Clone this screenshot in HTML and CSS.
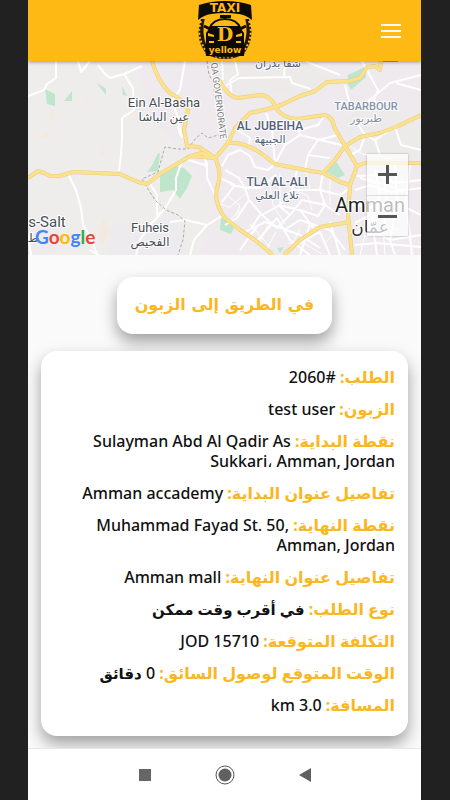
FILE: index.html
```html
<!DOCTYPE html>
<html lang="ar" dir="rtl">
<head>
<meta charset="utf-8">
<meta name="viewport" content="width=device-width, initial-scale=1">
<title>Taxi D Yellow</title>
<link rel="stylesheet" href="styles.css">
</head>
<body>
<div class="phone">
  <header class="topbar">
    <svg class="logo" viewBox="0 0 56 60" role="img" aria-label="Taxi D yellow">
      <path d="M4 18Q-1 32 4 44L9 53Q18 58 28 58Q38 58 47 53L52 44Q57 32 52 18Z" fill="#1c1709"/>
      <path d="M8 16Q4 32 10 46H46Q52 32 48 16Z" fill="#ffb915"/>
      <path d="M4 20Q0 32 5 43L10 52M52 20Q56 32 51 43L46 52" fill="none" stroke="#ffb915" stroke-width="2" stroke-dasharray="2 2"/>
      <path d="M18 56Q28 58 38 56" fill="none" stroke="#ffb915" stroke-dasharray="2 2"/>
      <path d="M2 4Q14 0 28 0Q42 0 54 4L55 19Q49 14 42 13Q28 11 14 13Q7 14 1 19Z" fill="#0d0b07"/>
      <path d="M23 14H34V17H23Z" fill="#0d0b07"/>
      <path d="M12 28Q16 18 28 18Q40 18 44 28" fill="none" stroke="#0d0b07" stroke-width="2"/>
      <path d="M7 25L13 28M49 25L43 28" stroke="#0d0b07" stroke-width="3"/>
      <path d="M9 32L14 25H42L47 32V44H9Z" fill="#0d0b07"/>
      <path d="M11 32L17 34L17 36L11 35ZM45 32L39 34L39 36L45 35ZM12 40H17V42H12ZM39 40H44V42H39Z" fill="#ffb915"/>
      <path d="M8 44H48L47 55H9Z" fill="#0d0b07"/>
      <text class="logo-taxi" x="28" y="11" text-anchor="middle">TAXI</text>
      <text class="logo-d" x="28" y="40" text-anchor="middle">D</text>
      <text class="logo-yellow" x="28" y="52" text-anchor="middle">yellow</text>
    </svg>
    <button class="menu" type="button" aria-label="القائمة"><span></span><span></span><span></span></button>
  </header>

  <section class="map" dir="ltr">
    <svg class="map-art" viewBox="28 61 393 194" preserveAspectRatio="xMidYMid slice">
      <rect x="28" y="61" width="393" height="194" fill="#efedeb"/>
      <path d="M135 61H421V255H200L214 200L180 150L150 118Z" fill="#eeeaee"/>
      <path d="M28 215L60 220L55 255H28ZM110 225L175 215L185 255H110Z" fill="#eeebef"/>
      <path d="M222 61H300L340 85L318 94L260 95L235 97Z M340 120L380 100L421 125V160H365Z" fill="#edebea"/>
      <g class="green">
        <path d="M45 89L55 94V106L47 104ZM72 91L64 101H72ZM96 82L106 89V95ZM122 86L127 96L123 95Z"/>
        <path d="M158 153L151 167L147 172L158 171L160 154Z"/>
        <path d="M160 175L175 166L184 168L192 176L187 188L180 199L173 190L160 192Z"/>
        <path d="M348 75L365 67L366 77L351 90L347 82Z"/>
        <path d="M325 171L335 160L345 175L338 178Z"/>
        <path d="M221 218L228 221L234 228L231 234L220 230Z"/>
        <path d="M277 248L284 247L280 253Z"/>
      </g>
      <g class="sand">
        <path d="M33 140L52 130L46 138ZM102 144L105 156L101 158ZM50 106L55 115L50 120ZM85 92L92 115L86 100ZM103 217L110 230L102 245L98 234Z"/>
      </g>
      <g class="street">
        <path d="M28 96L44 90L47 84L56 78V61M78 61L81 72L90 61M98 65L104 73L110 78L124 74L142 66M124 74L133 88L134 110L122 118M185 61L180 90L172 100"/>
        <path d="M122 118V138L121 155L119 171M68 174L76 190L81 208L83 225L92 240L97 255M90 250L99 255"/>
        <path d="M28 235L31 255M172 100L178 118L182 138M178 126L180 134L186 138"/>
        <path d="M150 184L157 195L157 215L164 210L176 190V178L182 161M164 210L150 225L140 240L136 255M170 222L185 220L207 225L225 214M207 225L194 240L190 255M207 162L207 178L215 195M205 158L207 170M188 160L205 165"/>
        <path d="M222 88L239 78L290 77L292 83L311 89M222 61L223 80M235 61L238 74L230 80L232 97M285 61L284 77M362 61L378 90L374 100L380 110M345 85L350 105L356 108M360 108L390 83L421 75M396 83L421 90M305 61L340 75"/>
        <path d="M235 128L250 138L249 145M266 113L272 130L275 164M281 115L295 119L300 135L285 145L275 164M300 135L345 146M325 115L318 125L300 130M338 135L318 140L308 155L305 169M308 155L330 158M355 120L365 135L375 140L390 130M365 135L360 150L350 155M375 140L380 155M395 127L401 145L421 150"/>
        <path d="M222 166L228 155L240 150L250 156L255 167L268 170L275 164M225 170L239 178L245 188L260 188L276 175M230 184L245 188L249 200L262 215L280 205L292 190L297 170M220 178L235 185L222 202M249 200L237 218L225 225M262 215L277 228L290 215L278 205M278 205L300 210L315 230M290 215L302 200L325 205L340 215M292 190L320 190L325 205L318 216L300 210M323 173L320 190L340 195L350 188M260 215L250 230M245 232L265 222L300 235L320 248M258 240L277 218L290 240L310 255M240 250L258 225M284 230L300 220L330 230L345 250M290 247L320 232L330 255M310 224L300 255M330 222L340 255"/>
        <path d="M355 190L370 185L390 192L421 188M352 205L375 207L395 202L421 215M357 176L380 175L395 183L421 180M375 170L380 195L372 220L377 255M395 165L397 200L390 240L395 255M352 232L372 230L390 240L421 235M355 245L377 243L421 247M410 165L406 200L412 255M357 200L370 215L355 223M360 178L376 183"/>
      </g>
      <g class="street thin">
        <path d="M228 196L240 206L236 215M248 203L230 220M270 185L273 205L285 224M280 173V205M289 187L308 196L312 210M306 169L310 190M330 177V205M215 203L230 207L245 194M268 225L260 242M276 232L266 250M250 224L270 247M288 243L305 244L322 254M300 229L287 255M334 233L326 242M360 255L368 222L400 213M383 178L388 205L383 228L385 255M366 178L400 190M365 237L398 228M350 146L362 154L390 158"/>
      </g>
      <path class="border" d="M207 61L209 75L214 83V95L222 108L225 133L208 138L202 133L195 139L188 149L178 149L165 147L162 157L158 172L142 179L148 189L155 200L166 210L178 215L185 221L183 240L178 255"/>
      <g class="road-edge">
        <path id="r1" d="M28 178L38 171L44 173L50 176H60L73 172L120 174L138 182L147 184L160 174L172 167L190 156L202 153L215 158"/>
        <path id="r2" d="M152 61Q158 82 170 93Q184 100 188 110L184 130L187 146L199 147L215 158L228 143L235 128L250 113L268 109L281 105L300 96L315 91L327 82L350 81L360 78L367 67L375 66L380 70L381 61"/>
        <path id="r3" d="M219 80Q228 97 238 98L260 95Q270 95 276 107Q281 118 298 119L325 115Q333 117 334 127L345 146L357 166L350 185L348 215L352 255"/>
        <path id="r4" d="M228 143Q243 141 262 154L275 164L300 169L323 173L340 182L350 185M323 173L335 160L345 146L360 137L380 133L398 126L421 115M357 166L365 163H421"/>
        <path id="r5" d="M190 156L215 158Q222 172 218 185Q212 200 225 218L240 230L255 240L273 255M284 255L300 240L320 227L350 222"/>
      </g>
      <g class="road">
        <use href="#r1"/><use href="#r2"/><use href="#r3"/><use href="#r4"/><use href="#r5"/>
      </g>
      <g class="label">
        <text class="town" x="164" y="107">Ein Al-Basha</text>
        <text class="town-ar" x="164" y="121">عين الباشا</text>
        <text class="town" x="150" y="232">Fuheis</text>
        <text class="town-ar" x="150" y="246">الفحيص</text>
        <text class="town large" x="47" y="227">s-Salt</text>
        <text class="town-ar" x="33" y="242">ط</text>
        <text class="area" x="270" y="130">AL JUBEIHA</text>
        <text class="area-ar" x="270" y="143">الجبيهة</text>
        <text class="area" x="277" y="186">TLA AL-ALI</text>
        <text class="area-ar" x="277" y="199">تلاع العلي</text>
        <text class="area pale" x="366" y="110">TABARBOUR</text>
        <text class="area-ar pale" x="366" y="122">طبربور</text>
        <text class="area-ar" x="278" y="67">شفا بدران</text>
        <text class="city" x="370" y="212">Amman</text>
        <text class="city-ar" x="370" y="233">عمّان</text>
        <text class="region" transform="translate(211 63) rotate(83)">QA GOVERNORATE</text>
        <path d="M383 61H398" stroke="#555" stroke-width="1"/>
      </g>
    </svg>
    <div class="google" aria-label="Google"><span class="blue">G</span><span class="red">o</span><span class="gold">o</span><span class="blue">g</span><span class="lime">l</span><span class="red">e</span></div>
    <div class="zoom">
      <button type="button" class="plus" aria-label="تكبير"></button>
      <button type="button" class="minus" aria-label="تصغير"></button>
    </div>
  </section>

  <main class="content">
    <h1 class="status">في الطريق إلى الزبون</h1>
    <section class="order">
      <p><b>الطلب:</b> #2060</p>
      <p><b>الزبون:</b> test user</p>
      <p><b>نقطة البداية:</b> Sulayman Abd Al Qadir As Sukkari، Amman, Jordan</p>
      <p><b>تفاصيل عنوان البداية:</b> Amman accademy</p>
      <p><b>نقطة النهاية:</b> <bdi>Muhammad Fayad St. 50, Amman, Jordan</bdi></p>
      <p><b>تفاصيل عنوان النهاية:</b> Amman mall</p>
      <p><b>نوع الطلب:</b> <span class="arabic">في أقرب وقت ممكن</span></p>
      <p><b>التكلفة المتوقعة:</b> 15710 JOD</p>
      <p><b>الوقت المتوقع لوصول السائق:</b> 0 <span class="arabic">دقائق</span></p>
      <p><b>المسافة:</b> 3.0 km</p>
    </section>
  </main>

  <nav class="system" dir="ltr">
    <button type="button" aria-label="التطبيقات"><svg viewBox="0 0 20 20"><path d="M4 4H16V16H4Z" fill="#666"/></svg></button>
    <button type="button" aria-label="الرئيسية"><svg viewBox="0 0 20 20"><circle cx="10" cy="10" r="9" fill="none" stroke="#555"/><circle cx="10" cy="10" r="6.500" fill="#606060"/></svg></button>
    <button type="button" aria-label="رجوع"><svg viewBox="0 0 20 20"><path d="M4 10L16 3V17Z" fill="#606060"/></svg></button>
  </nav>
</div>
</body>
</html>
```
FILE: styles.css
```css
* { box-sizing: border-box; }

body {
  margin: 0;
  background: #212121;
  font-family: "Noto Sans", "DejaVu Sans", sans-serif;
}

button {
  border: 0;
  padding: 0;
  background: none;
}

.phone {
  display: flex;
  flex-direction: column;
  min-height: 100vh;
  margin: 0 29px 0 28px;
  background: #fafafa;
  overflow: hidden;
}

.topbar {
  position: relative;
  z-index: 1;
  display: grid;
  grid-template-columns: 1fr auto 1fr;
  align-items: center;
  height: 61px;
  padding: 0 20px;
  background: #ffb915;
  box-shadow: 0 1px 4px rgba(0, 0, 0, 0.4);
}

.logo {
  grid-column: 2;
  width: 58px;
  height: 60px;
}

.logo text {
  fill: #ffb915;
  font-family: "DejaVu Sans", sans-serif;
  font-weight: 700;
}

.logo-taxi { font-size: 12px; }
.logo .logo-d { font-family: "DejaVu Serif", serif; font-size: 19px; }
.logo-yellow { font-size: 9px; }

.menu {
  grid-column: 1;
  grid-row: 1;
  justify-self: start;
  display: grid;
  gap: 4px;
  width: 20px;
}

.menu span {
  height: 2px;
  background: #fffaf0;
}

.map {
  position: relative;
  height: 194px;
  overflow: hidden;
}

.map-art {
  display: block;
  width: 100%;
  height: 100%;
}

.green { fill: #bfe6cd; }
.sand { fill: #f4e9df; }

.street {
  fill: none;
  stroke: #fff;
  stroke-width: 2;
  stroke-linejoin: round;
}

.thin { stroke-width: 1; }

.border {
  fill: none;
  stroke: #aaa;
  stroke-width: 1;
  stroke-dasharray: 3 2;
}

.road-edge,
.road {
  fill: none;
  stroke: #e8cb78;
  stroke-width: 4;
  stroke-linejoin: round;
}

.road use,
.road { stroke: #fce28f; stroke-width: 3; }

.label text {
  fill: #4a4e54;
  stroke: #fff;
  stroke-width: 2px;
  paint-order: stroke;
  text-anchor: middle;
  font-family: Roboto, "DejaVu Sans", sans-serif;
}

.label .town { font-size: 13px; }
.label .large { font-size: 15px; }
.label .town-ar { font-size: 12px; }
.label .area { font-size: 12px; font-weight: 500; fill: #526079; }
.label .area-ar { font-size: 11px; fill: #526079; }
.label .pale { fill: #8490a8; }
.label .area.pale { font-size: 11px; }
.label .city { font-size: 20px; fill: #222; }
.label .city-ar { font-size: 17px; fill: #333; }
.label .region { font-size: 9px; fill: #777; text-anchor: start; }

.google {
  position: absolute;
  left: 7px;
  bottom: 6px;
  font: 700 19px/24px Lato, sans-serif;
}

.blue { color: #4285f4; }
.red { color: #ea4335; }
.gold { color: #fbbc05; }
.lime { color: #34a853; }

.zoom {
  position: absolute;
  right: 13px;
  bottom: 19px;
  display: grid;
  width: 41px;
  background: rgba(255, 255, 255, 0.7);
  box-shadow: 0 0 2px rgba(0, 0, 0, 0.3);
}

.zoom button {
  display: grid;
  place-items: center;
  height: 41px;
}

.zoom .minus {
  border-top: 1px solid #ddd;
}

.zoom button::before,
.plus::after {
  content: "";
  grid-area: 1 / 1;
  width: 19px;
  height: 3px;
  background: #555;
}

.plus::after { transform: rotate(90deg); }

.content {
  flex: 1;
  display: flex;
  flex-direction: column;
  align-items: center;
  gap: 17px;
  padding: 22px 13px 12px;
}

.status,
.order {
  margin: 0;
  border-radius: 16px;
  background: #fff;
  box-shadow: 0 8px 16px rgba(0, 0, 0, 0.36);
}

.status {
  padding: 14px 18px 15px;
  color: #fab721;
  font: 700 16px/28px "DejaVu Sans", sans-serif;
}

.order {
  display: grid;
  gap: 12px;
  width: 100%;
  padding: 16px 13px 21px;
  color: #111;
  font-size: 16px;
  font-weight: 500;
  line-height: 20px;
}

.order p { margin: 0; }
.order b { color: #fab721; font-weight: 700; }
.arabic { font-size: 15px; font-weight: 700; }

.system {
  position: relative;
  display: flex;
  justify-content: center;
  gap: 60px;
  height: 52px;
  background: #fff;
  border-top: 1px solid #e8e8e8;
}

.system button { width: 20px; }

.system svg {
  display: block;
  width: 20px;
  height: 20px;
}
```
